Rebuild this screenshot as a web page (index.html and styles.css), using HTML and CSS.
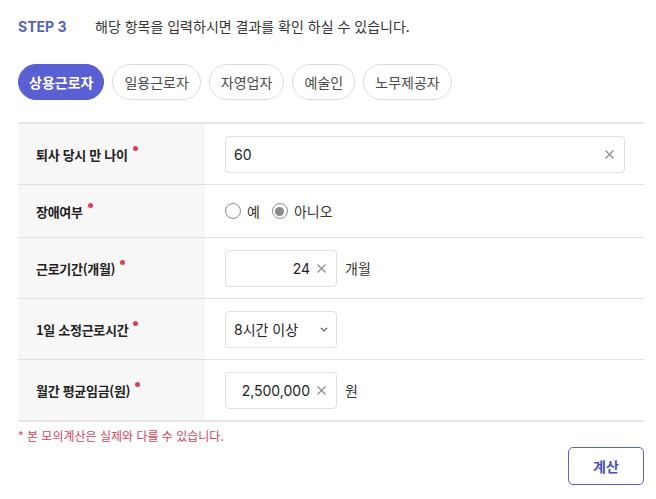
FILE: index.html
```html
<!DOCTYPE html>
<html lang="ko">
<head>
<meta charset="utf-8">
<link rel="stylesheet" href="styles.css">
</head>
<body>
<div class="page">
  <div class="step">
    <span class="step-no">STEP 3</span>
    <span class="step-desc">해당 항목을 입력하시면 결과를 확인 하실 수 있습니다.</span>
  </div>
  <div class="tabs">
    <button class="tab active">상용근로자</button>
    <button class="tab">일용근로자</button>
    <button class="tab">자영업자</button>
    <button class="tab">예술인</button>
    <button class="tab">노무제공자</button>
  </div>
  <div class="table">
    <div class="row r1">
      <div class="label">퇴사 당시 만 나이<span class="req"></span></div>
      <div class="value">
        <div class="input wide"><span class="val left">60</span><svg class="x" width="9" height="9" viewBox="0 0 9 9"><path d="M0.5 0.5l8 8M8.5 0.5l-8 8" stroke="#8a8a8a" stroke-width="1.1"/></svg></div>
      </div>
    </div>
    <div class="row r2">
      <div class="label">장애여부<span class="req"></span></div>
      <div class="value radios">
        <span class="radio"></span><span class="rlabel">예</span>
        <span class="radio on"></span><span class="rlabel">아니오</span>
      </div>
    </div>
    <div class="row r3">
      <div class="label">근로기간(개월)<span class="req"></span></div>
      <div class="value">
        <div class="input small"><span class="val right">24</span><svg class="x" width="9" height="9" viewBox="0 0 9 9"><path d="M0.5 0.5l8 8M8.5 0.5l-8 8" stroke="#8a8a8a" stroke-width="1.1"/></svg></div>
        <span class="unit">개월</span>
      </div>
    </div>
    <div class="row r4">
      <div class="label">1일 소정근로시간<span class="req"></span></div>
      <div class="value">
        <div class="input small select"><span class="val left">8시간 이상</span>
          <svg class="chev" width="8" height="5" viewBox="0 0 8 5"><path d="M0.8 0.8l3.2 3.2 3.2-3.2" fill="none" stroke="#555" stroke-width="1.1"/></svg>
        </div>
      </div>
    </div>
    <div class="row r5">
      <div class="label">월간 평균임금(원)<span class="req"></span></div>
      <div class="value">
        <div class="input small"><span class="val right">2,500,000</span><svg class="x" width="9" height="9" viewBox="0 0 9 9"><path d="M0.5 0.5l8 8M8.5 0.5l-8 8" stroke="#8a8a8a" stroke-width="1.1"/></svg></div>
        <span class="unit">원</span>
      </div>
    </div>
  </div>
  <p class="note">* 본 모의계산은 실제와 다를 수 있습니다.</p>
  <div class="actions">
    <button class="calc">계산</button>
  </div>
</div>
</body>
</html>
```
FILE: styles.css
```css
* { box-sizing: border-box; }
body { margin: 0; background: #fff; font-family: "Inter", "Noto Sans CJK KR", sans-serif; color: #222; }
.page { padding: 14px 12px 0 18px; }
.step { display: flex; align-items: center; height: 24px; }
.step-no { color: #5a5fc8; font-weight: 700; font-size: 14px; width: 77px; font-family: "Inter", sans-serif; }
.step-desc { font-size: 14px; color: #333; font-family: "Noto Sans CJK KR", sans-serif; }
.tabs { display: flex; gap: 8px; margin-top: 26px; }
.tab { height: 36px; min-width: 63px; border-radius: 18px; border: 1px solid #dcdcdc; background: #fff; font-family: "Noto Sans CJK KR", sans-serif; font-size: 14px; color: #4a4a4a; padding: 0 11px; }
.tab.active { background: #5a5fd3; border-color: #5a5fd3; color: #fff; font-weight: 700; padding: 0 10px; }
.table { margin-top: 22px; border-top: 2px solid #e6e6e6; }
.row { display: flex; border-bottom: 1px solid #e2e2e2; }
.r1 { height: 61px; } .r2 { height: 53px; } .r3 { height: 61px; } .r4 { height: 61px; } .r5 { height: 62px; }
.r5 { border-bottom: 2px solid #e6e6e6; }
.label { width: 187px; background: #f7f7f7; display: flex; align-items: center; padding-left: 18px; font-family: "Noto Sans CJK KR", sans-serif; font-weight: 700; font-size: 13px; color: #222; letter-spacing: -0.3px; }
.req { width: 5px; height: 5px; border-radius: 50%; background: #d8405a; margin-left: 5px; align-self: center; transform: translateY(-6px); }
.value { flex: 1; display: flex; align-items: center; padding-left: 20px; font-family: "Noto Sans CJK KR", sans-serif; font-size: 14px; }
.input { height: 37px; border: 1px solid #e0e0e0; border-radius: 4px; display: flex; align-items: center; padding: 0 10px 0 8px; background: #fff; }
.input.wide { width: 400px; }
.input.small { width: 112px; }
.val { flex: 1; font-family: "Inter", "Noto Sans CJK KR", sans-serif; font-size: 14px; color: #222; }
.val.right { text-align: right; padding-right: 7px; }
.x { flex: none; }
.unit { margin-left: 8px; color: #333; }
.select { padding-right: 8px; }
.radios { gap: 0; }
.radio { width: 16px; height: 16px; border: 1px solid #8a8a8a; border-radius: 50%; display: inline-flex; align-items: center; justify-content: center; background: #fff; }
.radio.on::after { content: ""; width: 9px; height: 9px; border-radius: 50%; background: #8a8a8a; }
.rlabel { margin-left: 6px; margin-right: 12px; color: #333; }
.note { margin: 5px 0 0; color: #d4445a; font-family: "Noto Sans CJK KR", sans-serif; font-size: 12px; }
.actions { display: flex; justify-content: flex-end; margin-top: 3px; }
.calc { width: 76px; height: 38px; border: 1px solid #5a5fd3; border-radius: 5px; background: #fff; color: #4a4fc0; font-family: "Noto Sans CJK KR", sans-serif; font-weight: 700; font-size: 14px; }
```
